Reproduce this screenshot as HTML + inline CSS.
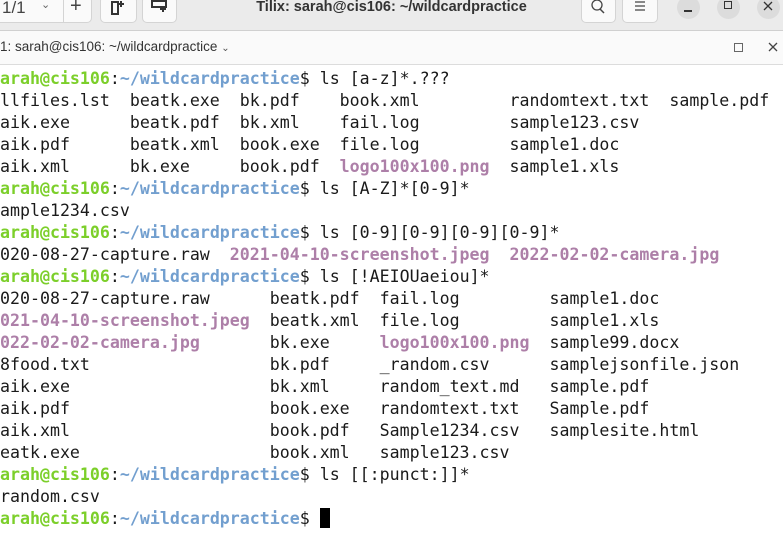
<!DOCTYPE html>
<html><head><meta charset="utf-8"><style>
body{margin:0;width:783px;height:558px;overflow:hidden;background:#fff;font-family:"Liberation Sans",sans-serif;position:relative}
.tb{position:absolute;left:0;top:0;width:783px;height:30px;background:#ebebeb;border-bottom:1px solid #d0d0d0}
.btn{position:absolute;top:-4px;height:27px;background:#fafafa;border:1px solid #d4d4d4;border-radius:5px;box-sizing:border-box}
.circ{position:absolute;top:-4px;width:23px;height:23px;border-radius:50%;background:#dcdcdc}
.title{position:absolute;top:0;left:0;width:783px;text-align:center;font-size:14.5px;font-weight:bold;color:#333;line-height:15px}
.tab{position:absolute;left:0;top:31px;width:783px;height:33px;background:#fafafa;border-bottom:1px solid #dcdcdc;font-size:13.5px;color:#333}
.term{position:absolute;left:0;top:68px;font-family:"DejaVu Sans Mono",monospace;font-size:16.6px;line-height:22px;white-space:pre;color:#1a1a1a}
.g{color:#7ccf2a;font-weight:bold}.b{color:#729fcf;font-weight:bold}.p{color:#ad7fa8;font-weight:bold}
.cur{display:inline-block;width:10px;height:20px;background:#000;vertical-align:-4px}
</style></head><body>
<div class="tb">
 <div style="position:absolute;left:0;top:-4px;width:92px;height:27px;background:#fafafa;border:1px solid #d4d4d4;border-left:none;border-radius:0 5px 5px 0;box-sizing:border-box"></div>
 <div style="position:absolute;left:63px;top:-4px;width:1px;height:27px;background:#d4d4d4"></div>
 <div style="position:absolute;left:2px;top:-2px;font-size:17px;color:#444">1/1</div>
 <div style="position:absolute;left:41px;top:-2px;font-size:11px;color:#666">&#8964;</div>
 <div style="position:absolute;left:70px;top:-5px;font-size:20px;color:#444">+</div>
 <div class="btn" style="left:100px;width:37px"></div>
 <svg style="position:absolute;left:110px;top:0" width="16" height="16"><path d="M2 2h6v12H2z" fill="none" stroke="#333" stroke-width="2"/><path d="M11 1v6M8 4h6" stroke="#333" stroke-width="2"/></svg>
 <div class="btn" style="left:142px;width:35px"></div>
 <svg style="position:absolute;left:151px;top:0" width="18" height="16"><path d="M1 1h14v6H1z" fill="none" stroke="#333" stroke-width="2"/><path d="M12 6v6M9 9h6" stroke="#333" stroke-width="2"/></svg>
 <div class="title">Tilix: sarah@cis106: ~/wildcardpractice</div>
 <div class="btn" style="left:581px;width:35px"></div>
 <svg style="position:absolute;left:590px;top:0" width="16" height="16"><circle cx="7" cy="5" r="5" fill="none" stroke="#444" stroke-width="1.3"/><path d="M10 9l4 4" stroke="#444" stroke-width="1.5"/></svg>
 <div class="btn" style="left:622px;width:36px"></div>
 <svg style="position:absolute;left:633px;top:0" width="14" height="14"><path d="M2 2h10M2 6h10M2 10h10" stroke="#444" stroke-width="1.2"/></svg>
 <div class="circ" style="left:677px"></div><div style="position:absolute;left:684px;top:10px;width:8px;height:1.5px;background:#333"></div>
 <div class="circ" style="left:717px"></div><div style="position:absolute;left:724px;top:1px;width:8px;height:8px;border:1.3px solid #333;box-sizing:border-box"></div>
 <div class="circ" style="left:757px"></div><svg style="position:absolute;left:763px;top:1px" width="10" height="10"><path d="M1 1l8 8M9 1l-8 8" stroke="#333" stroke-width="1.3"/></svg>
</div>
<div class="tab">
 <div style="position:absolute;left:0;top:8px">1: sarah@cis106: ~/wildcardpractice <span style="font-size:10px;color:#555">&#8964;</span></div>
 <div style="position:absolute;left:734px;top:12px;width:7px;height:7px;border:1px solid #666"></div>
 <svg style="position:absolute;left:768px;top:11px" width="10" height="10"><path d="M1 1l8 8M9 1l-8 8" stroke="#444" stroke-width="1.3"/></svg>
</div>
<div class="term"><span class="g">arah@cis106</span>:<span class="b">~/wildcardpractice</span>$ ls [a-z]*.???
llfiles.lst  beatk.exe  bk.pdf    book.xml         randomtext.txt  sample.pdf
aik.exe      beatk.pdf  bk.xml    fail.log         sample123.csv
aik.pdf      beatk.xml  book.exe  file.log         sample1.doc
aik.xml      bk.exe     book.pdf  <span class="p">logo100x100.png</span>  sample1.xls
<span class="g">arah@cis106</span>:<span class="b">~/wildcardpractice</span>$ ls [A-Z]*[0-9]*
ample1234.csv
<span class="g">arah@cis106</span>:<span class="b">~/wildcardpractice</span>$ ls [0-9][0-9][0-9][0-9]*
020-08-27-capture.raw  <span class="p">2021-04-10-screenshot.jpeg</span>  <span class="p">2022-02-02-camera.jpg</span>
<span class="g">arah@cis106</span>:<span class="b">~/wildcardpractice</span>$ ls [!AEIOUaeiou]*
020-08-27-capture.raw      beatk.pdf  fail.log         sample1.doc
<span class="p">021-04-10-screenshot.jpeg</span>  beatk.xml  file.log         sample1.xls
<span class="p">022-02-02-camera.jpg</span>       bk.exe     <span class="p">logo100x100.png</span>  sample99.docx
8food.txt                  bk.pdf     _random.csv      samplejsonfile.json
aik.exe                    bk.xml     random_text.md   sample.pdf
aik.pdf                    book.exe   randomtext.txt   Sample.pdf
aik.xml                    book.pdf   Sample1234.csv   samplesite.html
eatk.exe                   book.xml   sample123.csv
<span class="g">arah@cis106</span>:<span class="b">~/wildcardpractice</span>$ ls [[:punct:]]*
random.csv
<span class="g">arah@cis106</span>:<span class="b">~/wildcardpractice</span>$ <span class="cur"></span></div>
</body></html>
